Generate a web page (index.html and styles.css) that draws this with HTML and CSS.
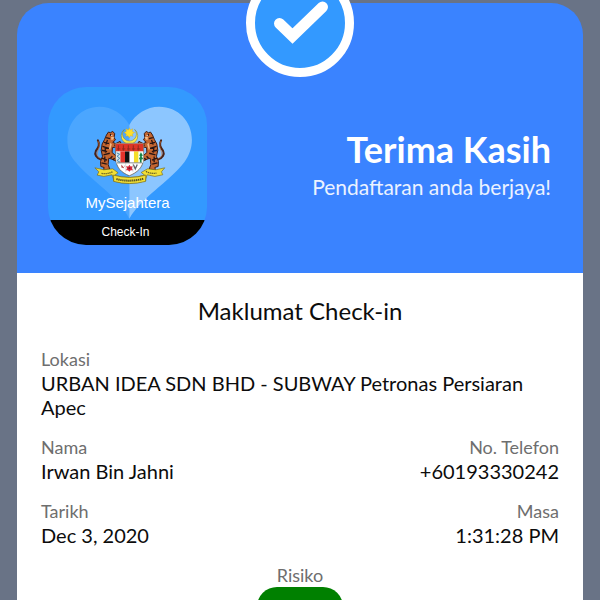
FILE: index.html
```html
<!DOCTYPE html>
<html lang="ms">
<head>
<meta charset="utf-8">
<meta name="viewport" content="width=device-width, initial-scale=1">
<title>MySejahtera Check-In</title>
<link rel="stylesheet" href="styles.css">
</head>
<body>
<main class="card">
  <svg class="check" viewBox="0 0 108 108" aria-hidden="true">
    <circle cx="54" cy="54" r="49.5" fill="#3399ff" stroke="#fff" stroke-width="9"/>
    <path d="M33.500 54.500 46.500 67 76.500 38" fill="none" stroke="#fff" stroke-width="11" stroke-linecap="round"/>
  </svg>
  <header class="header">
    <div class="app-icon">
      <svg class="app-art" viewBox="24 20 477 477" aria-hidden="true">
        <path d="M268 135C250 102 216 80 178 80C123 80 81 124 81 180C81 205 88 225 102 243C150 302 235 350 268 418Z" fill="#4ba6ff"/>
        <path d="M268 135C286 102 320 80 358 80C415 80 457 124 457 180C457 205 448 228 434 247C386 308 301 356 268 418Z" fill="#8cc6ff"/>
        <!-- crescent and star -->
        <path d="M253 148A25 25 0 1 0 284 148A21 21 0 1 1 253 148Z" fill="#f8e84d" stroke="#7a7a35" stroke-width="1.500"/>
        <path d="M268 143 271 150 278 146 277 154 284 157 277 162 279 169 271 167 268 174 264 167 257 169 259 162 252 157 259 154 258 146 265 150Z" fill="#ffdf29" stroke="#c89d20"/>
        <!-- tigers -->
        <g id="tiger">
          <path d="M183 239C168 235 162 223 167 213C175 202 180 194 173 181" fill="none" stroke="#4b2115" stroke-width="6" stroke-linecap="round"/>
          <path d="M182 236C166 228 171 219 174 210C178 201 179 191 173 183" fill="none" stroke="#cf7437" stroke-width="2"/>
          <path d="M199 165 205 156 211 158 218 154 224 161 222 172 226 180 218 187 227 191 240 184 243 190 228 201 217 203 216 218 229 229 237 239 231 245 216 238 206 235 204 254 209 268 190 270 192 263 182 260 181 245 187 229 183 211 186 192 193 179Z" fill="#c46630" stroke="#3c1b14" stroke-width="3" stroke-linejoin="round"/>
          <path d="M198 173 210 176M191 187 207 190M187 199 207 205M185 211 201 215M190 225 209 220M185 235 201 241M184 249 200 253M211 162 213 168M217 229 211 235M224 235 218 240M223 194 229 199M202 180 197 194M195 202 196 218M194 230 194 247" fill="none" stroke="#291513" stroke-width="4"/>
          <path d="M213 171 222 170 220 178 214 181ZM211 188 215 193 210 211 207 205Z" fill="#f4bd88"/>
          <circle cx="215" cy="166" r="2" fill="#fff"/>
        </g>
        <use href="#tiger" transform="matrix(-1 0 0 1 537 0)"/>
        <!-- shield -->
        <path d="M226 190H311V235C310 264 291 278 268 288C244 278 228 264 227 235Z" fill="#fff" stroke="#5e4930" stroke-width="2"/>
        <path d="M227 191H310V215H227Z" fill="#de3527"/>
        <path d="M235 196V212M250 196V212M265 196V212M280 196V212M295 196V212M231 207H241M246 207H256M261 207H271M276 207H286M291 207H301" stroke="#8e281e" stroke-width="3"/>
        <path d="M228 215H241V251H229Z" fill="#d8e7e8"/>
        <path d="M230 219 239 223 231 229 239 235 231 242 240 247" fill="none" stroke="#4687b5" stroke-width="3"/>
        <path d="M241 215H255V248H241Z" fill="#e4322b"/>
        <path d="M255 215H269V248H255Z" fill="#101010"/>
        <path d="M269 215H282V248H269Z" fill="#fff"/>
        <path d="M282 215H296V248H282Z" fill="#f4dd28"/>
        <path d="M296 215H310V249H296Z" fill="#f4fff4"/>
        <path d="M303 217 309 227 305 229 310 237 305 239V248H300V239L297 237 301 229 298 227Z" fill="#178349"/>
        <path d="M231 249H307" stroke="#555" stroke-width="2"/>
        <path d="M244 254 253 265 244 263ZM256 254 248 267 253 261Z" fill="#b44245"/>
        <path d="M268 255 272 260 278 259 276 265 279 271 272 271 268 276 264 271 258 271 261 265 258 259 265 260Z" fill="#db273a"/>
        <circle cx="268" cy="265" r="3" fill="#731a26"/>
        <path d="M280 254 286 267 292 254" fill="none" stroke="#65636a" stroke-width="4"/>
        <path d="M257 250V276M279 250V277" stroke="#999" stroke-width="1"/>
        <!-- ribbon -->
        <path d="M164 264 191 270 218 267 234 279 223 287 220 304Q268 318 318 303L314 286 304 278 323 267 348 270 375 264 365 276 369 285 345 290 322 285 316 302 314 286Q268 300 224 287L221 301 216 285 191 290 171 286 176 276Z" fill="#f2df35" stroke="#746b20" stroke-width="2" stroke-linejoin="round"/>
        <path d="M220 286Q268 300 318 286L317 305Q268 318 221 305Z" fill="#f2df35" stroke="#746b20" stroke-width="2"/>
        <path d="M184 281Q202 284 219 275M318 275Q334 283 350 280" fill="none" stroke="#665f27" stroke-width="4" stroke-dasharray="4 2"/>
        <path d="M229 298Q268 308 310 297" fill="none" stroke="#4f4b21" stroke-width="6" stroke-dasharray="4 2"/>
      </svg>
      <span class="app-name">MySejahtera</span>
      <span class="app-mode">Check-In</span>
    </div>
    <div class="thanks">
      <h1>Terima Kasih</h1>
      <p>Pendaftaran anda berjaya!</p>
    </div>
  </header>
  <section class="details">
    <h2>Maklumat Check-in</h2>
    <dl class="fields">
      <div class="field wide"><dt>Lokasi</dt><dd>URBAN IDEA SDN BHD - SUBWAY Petronas Persiaran Apec</dd></div>
      <div class="field"><dt>Nama</dt><dd>Irwan Bin Jahni</dd></div>
      <div class="field end"><dt>No. Telefon</dt><dd>+60193330242</dd></div>
      <div class="field"><dt>Tarikh</dt><dd>Dec 3, 2020</dd></div>
      <div class="field end"><dt>Masa</dt><dd>1:31:28 PM</dd></div>
      <div class="field wide risk"><dt>Risiko</dt><dd class="pill"></dd></div>
    </dl>
  </section>
</main>
</body>
</html>
```
FILE: styles.css
```css
* {
  box-sizing: border-box;
}

body {
  height: 100vh;
  margin: 0;
  padding: 3px 17px 0;
  overflow: hidden;
  background: #697386;
  color: #0c0c0c;
  font-family: Lato, "Liberation Sans", sans-serif;
}

h1, h2, p, dl, dd {
  margin: 0;
}

.card {
  position: relative;
  display: flex;
  flex-direction: column;
  min-height: 100vh;
}

.check {
  position: absolute;
  top: -34px;
  left: 50%;
  width: 108px;
  height: 108px;
  margin-left: -54px;
}

.header {
  display: flex;
  justify-content: space-between;
  padding: 84px 32px 28px 31px;
  border-radius: 32px 32px 0 0;
  background: #3a83ff;
  color: #fff;
}

.app-icon {
  position: relative;
  display: flex;
  flex-direction: column;
  justify-content: flex-end;
  width: 159px;
  height: 158px;
  overflow: hidden;
  border-radius: 38px;
  background: #3399ff;
  font-family: "Liberation Sans", sans-serif;
  text-align: center;
}

.app-art {
  position: absolute;
  inset: 0;
  width: 100%;
  height: 100%;
}

.app-name {
  position: relative;
  padding-bottom: 8px;
  font-size: 15px;
  line-height: 18px;
}

.app-mode {
  position: relative;
  padding-right: 4px;
  background: #000;
  font-size: 12px;
  line-height: 25px;
}

.thanks {
  padding-top: 42px;
  text-align: right;
}

h1 {
  font-size: 36px;
  line-height: 40px;
}

.thanks p {
  margin-top: 6px;
  color: #ebf2ff;
  font-size: 21px;
  line-height: 24px;
}

.details {
  flex: 1;
  padding: 24px 24px 0;
  background: #fff;
}

h2 {
  font-size: 24px;
  font-weight: 400;
  line-height: 28px;
  text-align: center;
}

.fields {
  display: grid;
  grid-template-columns: 1fr 1fr;
  row-gap: 16px;
  margin-top: 22px;
}

.wide {
  grid-column: 1 / -1;
}

.end {
  text-align: right;
}

dt {
  color: #6e6e6e;
  font-size: 18px;
  line-height: 24px;
}

dd {
  font-size: 20px;
  line-height: 24px;
}

.risk {
  display: flex;
  flex-direction: column;
  align-items: center;
}

.pill {
  width: 86px;
  height: 40px;
  border-radius: 20px;
  background: #008000;
}
```
